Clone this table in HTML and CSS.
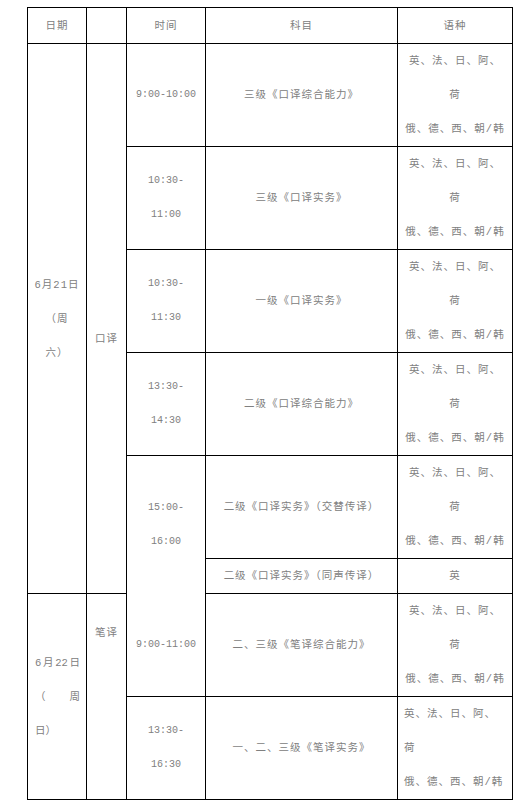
FILE: index.html
```html
<!DOCTYPE html>
<html lang="zh-CN">
<head>
<meta charset="utf-8">
<title>考试日程</title>
<link rel="stylesheet" href="styles.css">
</head>
<body>
<table class="sched">
  <colgroup>
    <col class="c-date">
    <col class="c-type">
    <col class="c-time">
    <col class="c-subj">
    <col class="c-lang">
  </colgroup>
  <tr class="r-head">
    <td>日期</td>
    <td></td>
    <td>时间</td>
    <td>科目</td>
    <td>语种</td>
  </tr>
  <tr class="r-std">
    <td rowspan="6" class="date">6月21日<br>（周<br>六）</td>
    <td rowspan="6" class="type type-oral">口译</td>
    <td class="t">9:00-10:00</td>
    <td>三级《口译综合能力》</td>
    <td class="lang">英、法、日、阿、<br>荷<br>俄、德、西、朝/韩</td>
  </tr>
  <tr class="r-std">
    <td class="t">10:30-<br>11:00</td>
    <td>三级《口译实务》</td>
    <td class="lang">英、法、日、阿、<br>荷<br>俄、德、西、朝/韩</td>
  </tr>
  <tr class="r-std">
    <td class="t">10:30-<br>11:30</td>
    <td>一级《口译实务》</td>
    <td class="lang">英、法、日、阿、<br>荷<br>俄、德、西、朝/韩</td>
  </tr>
  <tr class="r-std">
    <td class="t">13:30-<br>14:30</td>
    <td>二级《口译综合能力》</td>
    <td class="lang">英、法、日、阿、<br>荷<br>俄、德、西、朝/韩</td>
  </tr>
  <tr class="r-std">
    <td rowspan="2" class="t no-bottom">15:00-<br>16:00</td>
    <td>二级《口译实务》（交替传译）</td>
    <td class="lang">英、法、日、阿、<br>荷<br>俄、德、西、朝/韩</td>
  </tr>
  <tr class="r-short">
    <td>二级《口译实务》（同声传译）</td>
    <td>英</td>
  </tr>
  <tr class="r-std">
    <td rowspan="2" class="date date-just">
      <span class="jline"><span>6</span><span>月</span><span>22</span><span>日</span></span>
      <span class="jline"><span>（</span><span>周</span></span>
      <span class="jline jleft"><span>日）</span></span>
    </td>
    <td rowspan="2" class="type type-written">笔译</td>
    <td class="t no-top">9:00-11:00</td>
    <td>二、三级《笔译综合能力》</td>
    <td class="lang">英、法、日、阿、<br>荷<br>俄、德、西、朝/韩</td>
  </tr>
  <tr class="r-std">
    <td class="t">13:30-<br>16:30</td>
    <td>一、二、三级《笔译实务》</td>
    <td class="lang lang-left">英、法、日、阿、<br>荷<br>俄、德、西、朝/韩</td>
  </tr>
</table>
</body>
</html>
```
FILE: styles.css
```css
html, body {
  margin: 0;
  padding: 0;
  background: #ffffff;
}

.sched {
  margin: 7px 0 0 27px;
  border-collapse: collapse;
  table-layout: fixed;
  width: 485px;
  font-family: "Liberation Mono", "Noto Sans CJK SC", monospace;
  font-size: 10.5px;
  letter-spacing: 1px;
  color: #808080;
}

.c-date { width: 59px; }
.c-type { width: 40px; }
.c-time { width: 79px; }
.c-subj { width: 192px; }
.c-lang { width: 115px; }

.sched td {
  border: 1px solid #000;
  padding: 0 3px;
  text-align: center;
  vertical-align: middle;
  line-height: 34px;
}

.r-head { height: 36px; }
.r-std { height: 103px; }
.r-short { height: 35px; }

.sched td.t {
  font-size: 10px;
  letter-spacing: 0;
}

.sched td.no-bottom { border-bottom-style: hidden; }
.sched td.no-top { border-top-style: hidden; }

.sched td.type-oral {
  padding-top: 40px;
}

.sched td.type-written {
  vertical-align: top;
  padding-top: 22px;
}

.sched td.lang-left {
  text-align: left;
  padding-left: 6px;
}

.sched td.date-just {
  padding: 0 6px 0 7px;
}

.jline {
  display: flex;
  justify-content: space-between;
  line-height: 34px;
  letter-spacing: 0;
}

.jline.jleft {
  justify-content: flex-start;
}
```
